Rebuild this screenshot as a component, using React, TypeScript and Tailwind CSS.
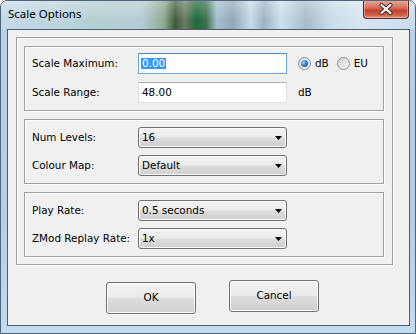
import React from "react";

const TextBox = ({ children, focused }: { children: React.ReactNode; focused?: boolean }) => (
  <div
    className={
      "h-[21px] w-[149px] flex items-center pl-[2px] bg-white border " +
      (focused ? "border-[#6ea6da] border-t-[#4b87c0]" : "border-[#dbdfe6] border-t-[#abadb3]")
    }
  >
    {children}
  </div>
);

const Combo = ({ value }: { value: string }) => (
  <div className="h-[21px] w-[149px] flex items-center justify-between pl-[3px] pr-[4px] rounded-[3px] border border-[#707070] shadow-[inset_0_0_0_1px_#fbfbfb] bg-[linear-gradient(180deg,#f3f3f3_0%,#ebebeb_48%,#dddddd_52%,#cfcfcf_100%)]">
    <span className="leading-none">{value}</span>
    <svg width="7" height="4" viewBox="0 0 7 4">
      <path d="M0 0 H7 L3.5 4 Z" fill="#000" />
    </svg>
  </div>
);

const Radio = ({ checked }: { checked?: boolean }) => (
  <div className="w-[13px] h-[13px] rounded-full border border-[#8a8a8a] bg-[linear-gradient(135deg,#d6d6d6,#fafafa)] flex items-center justify-center">
    <div
      className={
        "w-[9px] h-[9px] rounded-full flex items-center justify-center " +
        (checked ? "bg-[#dfe6ea]" : "bg-[linear-gradient(135deg,#cfcfcf,#f4f4f4)]")
      }
    >
      {checked && (
        <div className="w-[7px] h-[7px] rounded-full bg-[radial-gradient(circle_at_35%_35%,#8fd3ff_0%,#2a8ad4_45%,#0a3f78_100%)]" />
      )}
    </div>
  </div>
);

const Group = ({ children, className }: { children: React.ReactNode; className?: string }) => (
  <div className={"border border-[#a0a0a0] shadow-[inset_1px_1px_0_#ffffff,1px_1px_0_#ffffff] " + (className ?? "")}>
    {children}
  </div>
);

const Label = ({ children }: { children: React.ReactNode }) => (
  <div className="w-[106px] shrink-0 leading-none">{children}</div>
);

const Button = ({ children, className }: { children: React.ReactNode; className?: string }) => (
  <div
    className={
      "w-[90px] h-[32px] flex items-center justify-center rounded-[3px] border border-[#707070] shadow-[inset_0_0_0_1px_#fcfcfc] bg-[linear-gradient(180deg,#f3f3f3_0%,#ebebeb_48%,#dddddd_52%,#cfcfcf_100%)] " +
      (className ?? "")
    }
  >
    {children}
  </div>
);

export default function App() {
  return (
    <div className="w-[416px] h-[334px] bg-white">
      <div className="w-[416px] h-[334px] flex flex-col border border-[#52647a] rounded-t-[7px] overflow-hidden bg-[linear-gradient(180deg,#b9d2e8_0%,#b4cde4_60%,#c3daef_100%)]">
        {/* Title bar */}
        <div className="h-[28px] shrink-0 flex items-start bg-[linear-gradient(180deg,rgba(255,255,255,0.28)_0%,rgba(255,255,255,0)_70%),linear-gradient(90deg,#c6d9e8_0px,#bcd5df_60px,#b3cfd0_100px,#b6ccd6_140px,#8fa98f_163px,#3f5a3c_174px,#6c7c62_184px,#1e6a3a_195px,#3b6e4c_205px,#a7c0d1_216px,#90a7b9_232px,#c7dbea_250px,#9db2c3_263px,#cde0ee_280px,#a8bbca_305px,#cadcea_330px,#d6e5f1_360px,#c9dced_416px)]">
          <div className="pl-[7px] pt-[7px] text-[11.5px] leading-none text-black font-['Noto_Sans',sans-serif]">
            Scale Options
          </div>
          <div className="flex-1" />
          <div className="mr-[6px] w-[46px] h-[19px] -mt-[1px] rounded-b-[4px] border border-[#5a2a24] border-t-0 shadow-[inset_0_0_0_1px_rgba(255,200,190,0.5)] bg-[linear-gradient(180deg,#e9a99a_0%,#d9735f_40%,#c2412b_60%,#d0654c_85%,#e39a80_100%)] flex items-center justify-center">
            <svg width="14" height="12" viewBox="0 0 14 12">
              <path d="M2.5 2 L11.5 10 M11.5 2 L2.5 10" stroke="#3a2a2a" strokeWidth="4" strokeLinecap="round" />
              <path d="M2.5 2 L11.5 10 M11.5 2 L2.5 10" stroke="#ffffff" strokeWidth="2.2" strokeLinecap="round" />
            </svg>
          </div>
        </div>

        {/* Client area */}
        <div className="flex-1 flex pl-[6px] pr-[5px] pb-[7px]">
          <div className="flex-1 flex flex-col border border-[#4e5e6e] bg-[#f0f0f0] text-[10.4px] text-black font-['DejaVu_Sans',sans-serif]">
            <Group className="mt-[7px] ml-[8px] w-[377px] pt-[8px] pb-[7px] pl-[7px] flex flex-col gap-[8px]">
              <Group className="w-[360px] h-[65px] pt-[6px] pl-[7px] flex flex-col gap-[8px]">
                <div className="flex items-center h-[21px]">
                  <Label>Scale Maximum:</Label>
                  <TextBox focused>
                    <span className="bg-[#3399ff] text-white leading-[11px] px-[1px]">0.00</span>
                  </TextBox>
                  <div className="ml-[11px]">
                    <Radio checked />
                  </div>
                  <span className="ml-[4px] leading-none">dB</span>
                  <div className="ml-[8px]">
                    <Radio />
                  </div>
                  <span className="ml-[4px] leading-none">EU</span>
                </div>
                <div className="flex items-center h-[21px]">
                  <Label>Scale Range:</Label>
                  <TextBox>
                    <span className="leading-none pl-[1px]">48.00</span>
                  </TextBox>
                  <span className="ml-[11px] leading-none">dB</span>
                </div>
              </Group>
              <Group className="w-[360px] h-[65px] pt-[7px] pl-[7px] flex flex-col gap-[7px]">
                <div className="flex items-center h-[21px]">
                  <Label>Num Levels:</Label>
                  <Combo value="16" />
                </div>
                <div className="flex items-center h-[21px]">
                  <Label>Colour Map:</Label>
                  <Combo value="Default" />
                </div>
              </Group>
              <Group className="w-[360px] h-[65px] pt-[7px] pl-[7px] flex flex-col gap-[7px]">
                <div className="flex items-center h-[21px]">
                  <Label>Play Rate:</Label>
                  <Combo value="0.5 seconds" />
                </div>
                <div className="flex items-center h-[21px]">
                  <Label>ZMod Replay Rate:</Label>
                  <Combo value="1x" />
                </div>
              </Group>
            </Group>

            <div className="flex items-start">
              <Button className="ml-[98px] mt-[17px]">OK</Button>
              <Button className="ml-[33px] mt-[15px]">Cancel</Button>
            </div>
          </div>
        </div>
      </div>
    </div>
  );
}
